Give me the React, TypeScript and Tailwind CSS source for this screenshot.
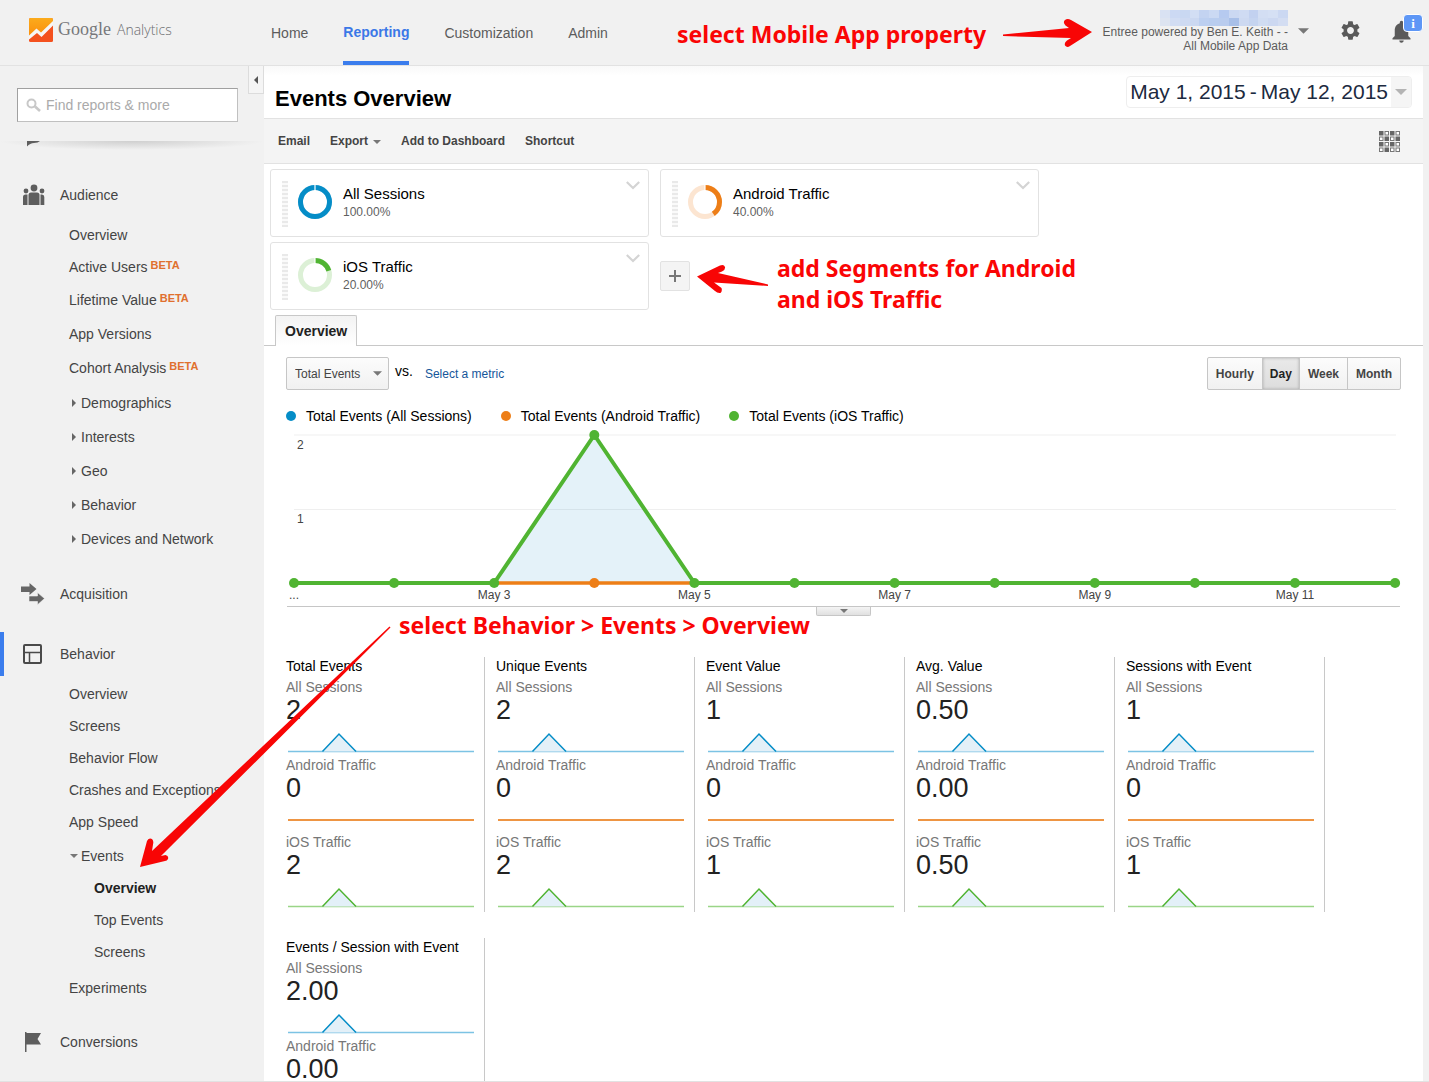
import React from "react";
import { MdNotifications, MdSettings } from "react-icons/md";

const BLUE = "#058dc7";
const ORANGE = "#ed7e17";
const GREEN = "#50b432";

function DownTriangle({ className }: { className: string }) {
  return (
    <svg viewBox="0 0 10 5" className={className} fill="currentColor" aria-hidden="true">
      <path d="M0 0h10L5 5z" />
    </svg>
  );
}

/* ---------- Header ---------- */

const MASK = [
  "#d9e2f3", "#ccd9f3", "#c9d8f2", "#d2def4", "#c3d3f1", "#cbd9f3", "#b6caf0", "#cbd8f2", "#cfdbf3", "#c2d1f0", "#d3def3", "#d5e0f4", "#cbd8f2",
  "#dde4f1", "#d2ddf3", "#cedaf2", "#cbd8f1", "#bccff0", "#b9cdef", "#b9ccee", "#a8bfe8", "#cdd9f1", "#c5d4f0", "#d0dcf2", "#ccd8f1", "#d3ddf2",
];

function Logo() {
  return (
    <a href="#home" className="flex items-center gap-[5px]" aria-label="Google Analytics">
      <svg width="24" height="24" viewBox="0 0 24 24" aria-hidden="true">
        <defs>
          <linearGradient id="logo-top" x1="0" y1="0" x2="0" y2="1">
            <stop offset="0" stopColor="#fbab1c" />
            <stop offset="1" stopColor="#fb8d0c" />
          </linearGradient>
        </defs>
        <rect width="24" height="24" rx="1.5" fill="#f4511e" />
        <path d="M1.500 0H22.500Q24 0 24 1.500V4.500L12.500 15.500L8 11.500L0 18.500V1.500Q0 0 1.500 0z" fill="url(#logo-top)" />
        <path d="M0 17.500L7.500 10.500L12 14.500L24 3V7.500L12.500 19L8 15L0 21.500z" fill="#f6f6f6" />
      </svg>
      <span className="flex items-baseline gap-1.5">
        <span className="font-['Liberation_Serif',serif] text-[18px] text-[#77787b]">Google</span>
        <span className="font-['Open_Sans',sans-serif] text-[14px] font-light text-[#6c6d70]">Analytics</span>
      </span>
    </a>
  );
}

function Header() {
  return (
    <header className="flex h-[66px] shrink-0 items-stretch border-b border-[#e2e2e2] bg-[#f1f1f1]">
      <div className="flex w-[271px] shrink-0 items-start pt-[16px] pl-[29px]">
        <Logo />
      </div>
      <nav className="flex gap-[35px] text-[14px] text-[#5c5c5c]">
        <a href="#home" className="flex items-center pt-0.5">Home</a>
        <a href="#reporting" className="flex items-center border-b-4 border-[#3b7ded] pt-1 font-bold text-[#3b78e7]">
          Reporting
        </a>
        <a href="#customization" className="flex items-center pt-0.5">Customization</a>
        <a href="#admin" className="flex items-center pt-0.5">Admin</a>
      </nav>
      <div className="ml-auto flex pr-[14px]">
        <button type="button" className="flex items-start gap-[10px] pt-[10px] text-right text-[12px] leading-[14px] text-[#5c5c5c]">
          <span className="flex flex-col items-end">
            <span className="-mb-px grid w-32 grid-cols-13" aria-hidden="true">
              {MASK.map((c, i) => (
                <span key={i} className="h-2" style={{ backgroundColor: c }} />
              ))}
            </span>
            <span>Entree powered by Ben E. Keith - -</span>
            <span>All Mobile App Data</span>
          </span>
          <DownTriangle className="mt-[18px] h-[6px] w-[11px] text-[#777]" />
        </button>
        <button type="button" aria-label="Settings" className="ml-[30px] flex items-start pt-[19px] text-[#5a5a5a]">
          <MdSettings size={23} />
        </button>
        <button type="button" aria-label="Notifications" className="relative ml-[26px] flex items-start pt-[18px] text-[#5a5a5a]">
          <MdNotifications size={27} />
          <span className="absolute top-[14px] left-[15px] flex h-[18px] w-5 items-center justify-center rounded-[4px] border border-white bg-[#5e97f6] font-['Liberation_Serif',serif] text-[13px] leading-none font-bold text-white">
            i
          </span>
        </button>
      </div>
    </header>
  );
}

/* ---------- Sidebar ---------- */

function SectionHeader({ label, icon, active }: { label: string; icon: React.ReactNode; active?: boolean }) {
  return (
    <a
      href={"#" + label.toLowerCase()}
      className={
        active
          ? "flex h-11 items-center border-l-4 border-[#3b7ded] pl-[17px]"
          : "flex h-11 items-center border-l-4 border-transparent pl-[17px]"
      }
    >
      <span className="w-[39px]">{icon}</span>
      {label}
    </a>
  );
}

function Item({ label, beta, tall }: { label: string; beta?: boolean; tall?: boolean }) {
  return (
    <li className={tall ? "h-[34px]" : "h-8"}>
      <a href="#report" className="flex h-full items-center pl-[69px]">
        {label}
        {beta && <span className="ml-[3px] pb-[3px] text-[11px] font-bold text-[#e0702e]">BETA</span>}
      </a>
    </li>
  );
}

function Expandable({ label }: { label: string }) {
  return (
    <li className="h-[34px]">
      <button type="button" className="flex h-full items-center gap-[5px] pl-[72px]">
        <svg width="4" height="8" viewBox="0 0 4 8" fill="#666" aria-hidden="true">
          <path d="M0 0L4 4L0 8z" />
        </svg>
        {label}
      </button>
    </li>
  );
}

function AudienceIcon() {
  return (
    <svg width="24" height="22" viewBox="0 0 24 22" fill="#5e5e5e" aria-hidden="true">
      <circle cx="13" cy="4" r="3.400" />
      <circle cx="5" cy="7" r="2.400" />
      <circle cx="21" cy="7" r="2.400" />
      <path d="M7.500 21V11q0-2.500 2.500-2.500h6q2.500 0 2.500 2.500v10z" />
      <path d="M2 21v-8q0-2.500 2.500-2.500H6.500V21zM19.500 21V10.500H21q2.300 0 2.300 2.500v8z" />
    </svg>
  );
}

function AcquisitionIcon() {
  return (
    <svg width="24" height="22" viewBox="0 0 24 22" fill="#666" aria-hidden="true">
      <path d="M0 3.500h8.500V0L15.500 6L8.500 12V9H0z" />
      <path d="M8 13h8.500V9.500L23.500 15.500L16.500 21.800V18.500H8z" stroke="#f1f1f1" strokeWidth="0.600" />
    </svg>
  );
}

function BehaviorIcon() {
  return (
    <svg width="23" height="20" viewBox="0 0 23 20" fill="none" stroke="#4a4a4a" aria-hidden="true">
      <rect x="3" y="1" width="17" height="18" rx="1" strokeWidth="2" />
      <path d="M3 8.500h17M8.500 8.500V19" strokeWidth="1.500" />
    </svg>
  );
}

function FlagIcon() {
  return (
    <svg width="23" height="20" viewBox="0 0 23 20" fill="#5e5e5e" aria-hidden="true">
      <path d="M4 0h1.500v1H20L16.500 7L20 12.500H5.500V20H4z" />
    </svg>
  );
}

function Sidebar() {
  return (
    <aside className="w-[264px] shrink-0 bg-[#f1f1f1] text-[14px] text-[#444]">
      <div className="flex h-[75px] items-start justify-between pl-[17px]">
        <label className="mt-[22px] flex h-[34px] w-[221px] items-center gap-[5px] border border-[#c0c0c0] border-t-[#a0a0a0] border-l-[#a0a0a0] bg-white pl-2">
          <svg width="15" height="14" viewBox="0 0 15 14" fill="none" stroke="#c8c8c8" className="shrink-0" aria-hidden="true">
            <circle cx="5.500" cy="5.500" r="4" strokeWidth="2" />
            <path d="M9 8.500L14 13" strokeWidth="2.600" />
          </svg>
          <input
            type="search"
            aria-label="Find reports & more"
            placeholder="Find reports & more"
            className="w-full min-w-0 bg-transparent text-[14px] outline-none placeholder:text-[#aaa]"
          />
        </label>
        <button
          type="button"
          aria-label="Collapse navigation"
          className="flex h-7 w-4 items-center justify-center border border-t-0 border-[#dcdcdc] bg-[#f5f5f5]"
        >
          <svg width="4" height="8" viewBox="0 0 4 8" fill="#555" aria-hidden="true">
            <path d="M4 0L0 4L4 8z" />
          </svg>
        </button>
      </div>
      <div className="h-8 bg-[radial-gradient(50%_9px_at_50%_0,#cfcfcf,#f1f1f100)] pl-[27px]">
        <svg width="14" height="6" viewBox="0 0 14 6" fill="#5e5e5e" aria-hidden="true">
          <path d="M0 0H13Q11 2 7 2Q3 2 0 5.500z" />
        </svg>
      </div>
      <nav className="flex flex-col gap-4">
        <div>
          <SectionHeader label="Audience" icon={<AudienceIcon />} />
          <ul className="pt-0.5">
            <Item label="Overview" />
            <Item label="Active Users" beta />
            <Item label="Lifetime Value" beta tall />
            <Item label="App Versions" tall />
            <Item label="Cohort Analysis" beta tall />
          </ul>
          <ul className="pt-px">
            <Expandable label="Demographics" />
            <Expandable label="Interests" />
            <Expandable label="Geo" />
            <Expandable label="Behavior" />
            <Expandable label="Devices and Network" />
          </ul>
        </div>
        <SectionHeader label="Acquisition" icon={<AcquisitionIcon />} />
        <div>
          <SectionHeader label="Behavior" icon={<BehaviorIcon />} active />
          <ul className="pt-0.5">
            <Item label="Overview" />
            <Item label="Screens" />
            <Item label="Behavior Flow" />
            <Item label="Crashes and Exceptions" />
            <Item label="App Speed" />
            <li className="pb-1">
              <button type="button" className="flex h-[34px] items-center gap-[3px] pt-0.5 pl-[70px]">
                <DownTriangle className="h-1 w-2 text-[#777]" />
                Events
              </button>
              <ul>
                <li>
                  <a href="#overview" className="flex h-8 items-center pl-[94px] font-bold text-[#222]">Overview</a>
                </li>
                <li>
                  <a href="#top-events" className="flex h-8 items-center pl-[94px]">Top Events</a>
                </li>
                <li>
                  <a href="#screens" className="flex h-8 items-center pl-[94px]">Screens</a>
                </li>
              </ul>
            </li>
            <Item label="Experiments" />
          </ul>
        </div>
        <SectionHeader label="Conversions" icon={<FlagIcon />} />
      </nav>
    </aside>
  );
}

/* ---------- Segments ---------- */

function Segment({ name, share, color, track }: { name: string; share: number; color: string; track: string }) {
  const circumference = 2 * Math.PI * 14.5;
  const arc = (circumference * share) / 100;
  return (
    <section className="flex h-[68px] w-[379px] items-start rounded-[3px] border border-[#e2e2e2] bg-white pr-2 pl-[11px]">
      <span className="mt-[11px] h-[46px] w-[6px] bg-[repeating-linear-gradient(#e9e9e9_0_2px,#fafafa_2px_4px)]" />
      <svg width="34" height="34" viewBox="0 0 34 34" fill="none" strokeWidth="5" className="mt-[15px] ml-[10px]" aria-hidden="true">
        <circle cx="17" cy="17" r="14.500" stroke={track} />
        <circle
          cx="17"
          cy="17"
          r="14.500"
          stroke={color}
          strokeDasharray={`${arc} ${circumference - arc}`}
          transform="rotate(-90 17 17)"
        />
        <path d="M17 0V6" stroke="#fff" strokeWidth="1.200" />
      </svg>
      <div className="mt-[14px] ml-[11px]">
        <h2 className="text-[15px] leading-5 text-black">{name}</h2>
        <p className="text-[12px] leading-4 text-[#5f5f5f]">{share.toFixed(2)}%</p>
      </div>
      <button type="button" aria-label={"Options for " + name} className="mt-[11px] ml-auto">
        <svg width="14" height="9" viewBox="0 0 14 9" fill="none" stroke="#d4d4d4" strokeWidth="2.200" aria-hidden="true">
          <path d="M0.800 1L7 7L13.200 1" />
        </svg>
      </button>
    </section>
  );
}

/* ---------- Chart ---------- */

const LEGEND = [
  { label: "Total Events (All Sessions)", color: BLUE },
  { label: "Total Events (Android Traffic)", color: ORANGE },
  { label: "Total Events (iOS Traffic)", color: GREEN },
];

const VALUES = [0, 0, 0, 2, 0, 0, 0, 0, 0, 0, 0, 0];

function EventsChart() {
  const x = (i: number) => 8 + i * 100.1;
  const y = (v: number) => 157 - v * 74;
  const points = VALUES.map((v, i) => `${x(i)},${y(v)}`).join(" ");
  return (
    <svg viewBox="0 0 1115 181" className="block h-auto w-full" role="img" aria-label="Total events per day">
      <path d="M8 9H1110M8 83.500H1110" stroke="#efefef" />
      <polygon points={`${x(2)},157 ${x(3)},9 ${x(4)},157`} fill={BLUE} fillOpacity="0.110" />
      <path d="M8 157H1109" stroke={ORANGE} strokeWidth="3" />
      <polyline points={points} fill="none" stroke={GREEN} strokeWidth="4" strokeLinejoin="round" />
      <path d={`M${x(2)} 157H${x(4)}`} stroke={ORANGE} strokeWidth="3" />
      <circle cx={x(3)} cy="157" r="5" fill={ORANGE} />
      {VALUES.map((v, i) => (
        <circle key={i} cx={x(i)} cy={y(v)} r="5" fill={GREEN} />
      ))}
      <g fontSize="12" fill="#444">
        <text x="11" y="23">2</text>
        <text x="11" y="97">1</text>
        <text x="3" y="173">...</text>
        {[2, 4, 6, 8, 10].map((i) => (
          <text key={i} x={x(i)} y="173" textAnchor="middle">
            May {i + 1}
          </text>
        ))}
      </g>
      <path d="M1 180.500H1114" stroke="#c6c6c6" />
    </svg>
  );
}

/* ---------- Metrics ---------- */

const METRICS = [
  { title: "Total Events", values: ["2", "0", "2"] },
  { title: "Unique Events", values: ["2", "0", "2"] },
  { title: "Event Value", values: ["1", "0", "1"] },
  { title: "Avg. Value", values: ["0.50", "0.00", "0.50"] },
  { title: "Sessions with Event", values: ["1", "0", "1"] },
  { title: "Events / Session with Event", values: ["2.00", "0.00"] },
];

const SERIES = [
  { name: "All Sessions", color: BLUE, light: "#7cc3e4" },
  { name: "Android Traffic", color: ORANGE, light: ORANGE },
  { name: "iOS Traffic", color: GREEN, light: "#9ad587" },
];

function Sparkline({ index }: { index: number }) {
  const { color, light } = SERIES[index];
  return (
    <svg width="190" height="31" viewBox="0 0 190 31" fill="none" className="block" aria-hidden="true">
      {index === 1 ? (
        <path d="M2 19H188" stroke="#ee9543" strokeWidth="2" />
      ) : (
        <>
          <path d="M2 28.500H188" stroke={light} strokeWidth="1.500" />
          <path d="M36.500 28.500L53 11L70 28.500" fill="#e3f0f8" stroke={color} strokeWidth="1.500" />
        </>
      )}
    </svg>
  );
}

function Metric({ title, values }: { title: string; values: string[] }) {
  return (
    <section className="min-h-[255px] w-[210px] border-r border-[#c8c8c8] pr-2 pl-[11px] text-[14px]">
      <h3 className="pb-0.5 leading-[18px] text-black">{title}</h3>
      {values.map((value, i) => (
        <div key={i} className={i === 1 ? "" : "pb-px"}>
          <p className="leading-5 text-[#777]">{SERIES[i].name}</p>
          <p className="text-[27px] leading-[26px] text-[#222]">{value}</p>
          <Sparkline index={i} />
        </div>
      ))}
    </section>
  );
}

/* ---------- Main column ---------- */

const CELLS = "FHFHHFHFFHFHHFHH".split("");

function Main() {
  return (
    <main className="mr-[6px] min-w-0 flex-1 overflow-hidden bg-white">
      <div className="flex h-[53px] items-start justify-between border-b border-[#e2e2e2] bg-[linear-gradient(#f9f9f9,#ffffff_10px)] pr-[11px] pl-[11px]">
        <h1 className="pt-[19px] text-[22px] leading-7 font-bold text-black">Events Overview</h1>
        <button
          type="button"
          className="mt-[10px] flex h-8 items-stretch overflow-hidden rounded-[4px] border border-[#eee] bg-white text-[21px] text-[#1c2a40]"
        >
          <span className="flex items-center gap-1 px-[3px]">
            <span>May 1, 2015</span>
            <span>-</span>
            <span>May 12, 2015</span>
          </span>
          <span className="flex w-5 items-center justify-center bg-[#f5f5f5]">
            <DownTriangle className="h-[6px] w-3 text-[#b4b4b4]" />
          </span>
        </button>
      </div>

      <div className="flex h-[45px] items-center gap-5 border-b border-[#e2e2e2] bg-[#f4f4f4] pr-[23px] pl-[14px] text-[12px] font-bold text-[#444]">
        <button type="button">Email</button>
        <button type="button" className="flex items-center gap-[5px]">
          Export
          <DownTriangle className="mt-0.5 h-1 w-2 text-[#777]" />
        </button>
        <button type="button">Add to Dashboard</button>
        <button type="button">Shortcut</button>
        <button type="button" aria-label="Customize layout" className="ml-auto">
          <svg width="21" height="21" viewBox="0 0 21 21" aria-hidden="true">
            {CELLS.map((c, i) => {
              const cx = (i % 4) * 5.5;
              const cy = Math.floor(i / 4) * 5.5;
              return c === "F" ? (
                <rect key={i} x={cx} y={cy} width="4.500" height="4.500" fill="#666" />
              ) : (
                <rect key={i} x={cx + 0.5} y={cy + 0.5} width="3.500" height="3.500" fill="#fff" stroke="#777" />
              );
            })}
          </svg>
        </button>
      </div>

      <div className="flex flex-wrap gap-x-[11px] gap-y-[5px] pt-[5px] pl-[6px]">
        <Segment name="All Sessions" share={100} color={BLUE} track="#cde8f4" />
        <Segment name="Android Traffic" share={40} color={ORANGE} track="#fce5d1" />
        <Segment name="iOS Traffic" share={20} color={GREEN} track="#dcf0d6" />
        <button
          type="button"
          aria-label="Add segment"
          className="flex size-[30px] items-center justify-center self-center rounded-[2px] border border-[#e2e2e2] bg-[#f4f4f4]"
        >
          <svg width="12" height="12" viewBox="0 0 12 12" stroke="#777" strokeWidth="2" aria-hidden="true">
            <path d="M6 0V12M0 6H12" />
          </svg>
        </button>
      </div>

      <div className="flex h-9 items-end border-b border-[#c8c8c8] pl-[11px]">
        <button
          type="button"
          className="-mb-px h-[31px] rounded-t-[2px] border border-b-0 border-[#c8c8c8] bg-[linear-gradient(#f3f3f3,#ffffff)] px-[9px] text-[14px] font-bold text-[#222]"
        >
          Overview
        </button>
      </div>

      <div className="flex items-center px-[22px] pt-[11px] text-[12px]">
        <div className="relative">
          <select
            aria-label="Metric"
            className="block h-[33px] w-[103px] appearance-none rounded-[2px] border border-[#c6c6c6] bg-[linear-gradient(#fcfcfc,#f1f1f1)] pl-2 text-[12px] text-[#444]"
          >
            <option>Total Events</option>
          </select>
          <DownTriangle className="pointer-events-none absolute top-[14px] right-[7px] h-[5px] w-[9px] text-[#777]" />
        </div>
        <span className="ml-1.5 pb-1 text-[14px] text-black">vs.</span>
        <a href="#metric" className="ml-3 text-[#15569a]">Select a metric</a>
        <div className="ml-auto flex h-[33px] divide-x divide-[#c6c6c6] overflow-hidden rounded-[2px] border border-[#c6c6c6] bg-[linear-gradient(#fcfcfc,#f1f1f1)] font-bold text-[#444]">
          <button type="button" className="px-2">Hourly</button>
          <button type="button" className="bg-[linear-gradient(#e9e9e9,#dddddd)] px-[7px] text-[#222] shadow-[inset_0_0_3px_#aaa]">
            Day
          </button>
          <button type="button" className="px-2">Week</button>
          <button type="button" className="px-2">Month</button>
        </div>
      </div>

      <div className="px-[22px] pt-4">
        <ul className="flex gap-[29px] text-[14px] leading-5 text-black">
          {LEGEND.map((entry) => (
            <li key={entry.label} className="flex items-center gap-[10px]">
              <span className="size-[10px] rounded-full" style={{ backgroundColor: entry.color }} />
              {entry.label}
            </li>
          ))}
        </ul>
        <EventsChart />
        <button
          type="button"
          aria-label="Expand chart"
          className="mx-auto flex h-[9px] w-[55px] items-center justify-center rounded-b-[2px] border border-t-0 border-[#c6c6c6] bg-[linear-gradient(#f4f4f4,#e0e0e0)]"
        >
          <DownTriangle className="h-1 w-2 text-[#777]" />
        </button>
      </div>

      <div className="flex flex-wrap gap-y-[26px] pt-[41px] pl-[11px]">
        {METRICS.map((m) => (
          <Metric key={m.title} title={m.title} values={m.values} />
        ))}
      </div>
    </main>
  );
}

/* ---------- Instruction overlay ---------- */

function Notes() {
  return (
    <div className="pointer-events-none absolute inset-0 font-['Noto_Sans',sans-serif] text-[23px] leading-[31px] font-bold whitespace-nowrap text-[#fa0505]">
      <svg width="1429" height="1082" viewBox="0 0 1429 1082" fill="#f80505" className="absolute top-0 left-0" aria-hidden="true">
        <path d="M1003 34.500L1069 28L1065.500 25.500Q1062.500 22 1065 20Q1067.500 18 1071 20L1092 32L1070 46Q1067 48 1065 45.500Q1064 42.500 1067 40.500L1071 38L1003 36z" />
        <path d="M697 276.500L720 265.500Q724 264 725 267Q725.500 270 722 271.500L718 273L768 284.500V286L714 282.500L721.500 288Q722.500 291 720.500 293Q717.500 293.500 715 291z" />
        <path d="M140 867L147 841Q149 837.500 152 839Q154 841 153 844.500L152 851L389.500 626.500L390.500 627.500L161 856L165.500 855Q169 856 168 859Q167 861 165 861z" />
      </svg>
      <p className="absolute top-[19px] left-[677px]">select Mobile App property</p>
      <p className="absolute top-[253px] left-[777px]">
        add Segments for Android
        <br />
        and iOS Traffic
      </p>
      <p className="absolute top-[610px] left-[399px]">{"select Behavior > Events > Overview"}</p>
    </div>
  );
}

export default function App() {
  return (
    <div className="relative flex h-screen flex-col overflow-hidden border-b border-[#e2e2e2] bg-[#f1f1f1] font-['Liberation_Sans',Arial,sans-serif]">
      <Header />
      <div className="flex min-h-0 flex-1">
        <Sidebar />
        <Main />
      </div>
      <Notes />
    </div>
  );
}
